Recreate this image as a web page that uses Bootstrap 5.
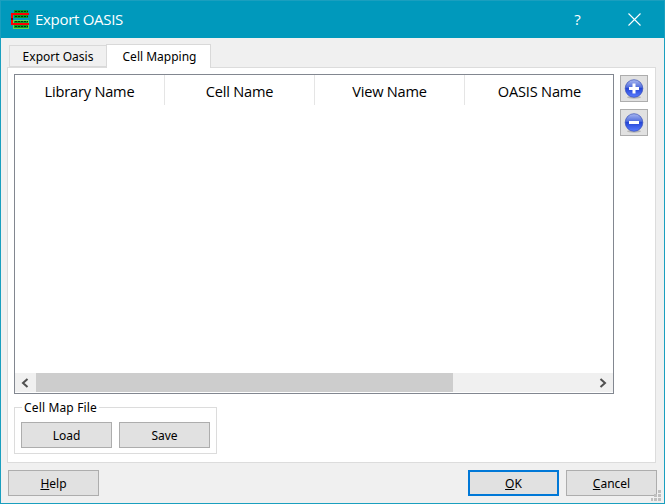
<!DOCTYPE html>
<html lang="en">
<head>
<meta charset="utf-8">
<meta name="viewport" content="width=device-width, initial-scale=1">
<title>Export OASIS</title>
<link href="https://cdn.jsdelivr.net/npm/bootstrap@5.3.0/dist/css/bootstrap.min.css" rel="stylesheet">
<style>
body{width:665px;height:504px;overflow:hidden;font:12px/16px "Noto Sans","Open Sans",sans-serif;color:#000}
.window{width:665px;height:504px;background:#f0f0f0;border:1px solid #1a9fbf}
.titlebar{height:37px;background:#0099bc;color:#fff;padding-left:10px}
.logo{margin-top:1px}
.caption{font-family:"Open Sans",sans-serif;font-size:15px;margin-left:4px;letter-spacing:-.3px;padding-bottom:2px}
.help-mark{font-family:"Open Sans",sans-serif;font-size:15px;width:57px;padding-bottom:2px}
.close-mark{width:57px;margin-right:1px}
.tabs{height:29px;padding:5px 0 0 8px}
.tabs .nav-link{border:1px solid #d9d9d9;border-radius:0;color:#000;padding:0;text-align:center;margin:0}
.tabs .tab-one{width:97px;height:22px;border-right:0;line-height:22px;background:#f0f0f0}
.tabs .tab-two{width:105px;height:24px;line-height:24px;background:#fff;border-bottom:0;padding-left:2px;margin-bottom:-1px;position:relative;z-index:1}
.pane{margin:0 8px 0 6px;height:396px;background:#fff;border:1px solid #dcdcdc;padding:6px 7px 0 6px}
.grid{width:600px;height:320px;border:1px solid #828790}
.heads{height:30px;font-family:"Open Sans",sans-serif;font-size:14.6px;letter-spacing:-.2px}
.heads>div{width:150px;flex:none;border-right:1px solid #e5e5e5;padding-top:2px}
.heads>div:last-child{border:0;width:149px}
.scroll{height:19px;background:#f0f0f0;margin-bottom:1px}
.thumb{width:417px;background:#cdcdcd;height:19px}
.arrow{width:21px}
.arrow:first-child{padding-right:2px}
.arrow:last-child{padding-left:1px}
.dlg-btn{width:91px;height:26px;background:#e1e1e1;border:1px solid #adadad;border-radius:0;padding:1px 0 0;font-size:12px;line-height:24px;color:#000}
.dlg-btn:hover{background:#e5f1fb}
.dlg-btn.default{border:2px solid #0078d7;line-height:22px}
.tool{width:28px;height:27px;background:#e1e1e1;border:1px solid #adadad;border-radius:0;padding:0}
.tools{padding-top:1px;gap:7px}
.group{width:203px;height:54px;margin-top:6px;position:relative;padding:22px 7px 0 7px}
.frame{height:47px;border:1px solid #dcdcdc;position:absolute;left:0;right:0;top:7px}
.legend-text{position:absolute;left:8px;top:0;background:#fff;padding:0 2px;line-height:16px;white-space:nowrap;letter-spacing:.15px}
.actions{padding:7px 7px 0 7px;gap:7px}
.grip{position:absolute;left:651px;top:490px}
svg{display:block}
</style>
</head>
<body>
<div class="window">
  <header class="titlebar d-flex align-items-center">
    <svg class="logo" width="20" height="20" viewBox="0 0 20 20" shape-rendering="crispEdges">
      <path fill="#08a02a" d="M3 0h14v8H3z"/>
      <path fill="#62d850" d="M2 10h16v9H2z"/>
      <path fill="#08a02a" d="M3 11h14v7H3z"/>
      <path fill="#0099bc" d="M2 8h16v2H2z"/>
      <path stroke="#00380c" stroke-width="1" stroke-dasharray="2 1" d="M4 1.500h13M4 6.500h13M4 11.500h13M4 16.500h13"/>
      <path fill="none" stroke="#f00" stroke-width="2" d="M18 4H1v10h17"/>
      <path fill="#800" d="M0 8h2v2H0z"/>
    </svg>
    <span class="caption">Export OASIS</span>
    <span class="help-mark ms-auto text-center">?</span>
    <span class="close-mark d-flex justify-content-center"><svg width="13" height="13"><path d="M.5.5l12 12M12.500.5l-12 12" stroke="#fff" stroke-width="1.100"/></svg></span>
  </header>
  <nav class="tabs nav align-items-end">
    <a class="nav-link tab-one">Export Oasis</a>
    <a class="nav-link tab-two">Cell Mapping</a>
  </nav>
  <main class="pane">
    <div class="d-flex">
      <div class="grid d-flex flex-column">
        <div class="heads d-flex">
          <div class="d-flex align-items-center justify-content-center">Library Name</div>
          <div class="d-flex align-items-center justify-content-center">Cell Name</div>
          <div class="d-flex align-items-center justify-content-center">View Name</div>
          <div class="d-flex align-items-center justify-content-center">OASIS Name</div>
        </div>
        <div class="scroll d-flex align-items-center mt-auto">
          <div class="arrow d-flex justify-content-center"><svg width="8" height="10"><path d="M6.500 1L2 5l4.500 4" fill="none" stroke="#505050" stroke-width="2"/></svg></div>
          <div class="thumb"></div>
          <div class="arrow d-flex justify-content-center ms-auto"><svg width="8" height="10"><path d="M1.500 1L6 5 1.500 9" fill="none" stroke="#505050" stroke-width="2"/></svg></div>
        </div>
      </div>
      <div class="tools d-flex flex-column ms-auto">
        <button class="btn tool d-flex justify-content-center align-items-center" aria-label="Add">
          <svg width="20" height="20" viewBox="0 0 20 20">
            <defs><linearGradient id="ball" x2="0" y2="1"><stop stop-color="#a9b8f0"/><stop offset=".42" stop-color="#5570dd"/><stop offset=".5" stop-color="#2546d6"/><stop offset="1" stop-color="#5b7dff"/></linearGradient></defs>
            <ellipse cx="10" cy="18.300" rx="7" ry="1.500" fill="#9a9a9a" opacity=".6"/>
            <circle cx="10" cy="9.500" r="8.800" fill="url(#ball)" stroke="#344cb8" stroke-width=".7"/>
            <path d="M10 4.500v10M5 9.500h10" stroke="#fff" stroke-width="3"/>
          </svg>
        </button>
        <button class="btn tool d-flex justify-content-center align-items-center" aria-label="Remove">
          <svg width="20" height="20" viewBox="0 0 20 20">
            <ellipse cx="10" cy="18.300" rx="7" ry="1.500" fill="#9a9a9a" opacity=".6"/>
            <circle cx="10" cy="9.500" r="8.800" fill="url(#ball)" stroke="#344cb8" stroke-width=".7"/>
            <path d="M5 9.500h10" stroke="#fff" stroke-width="3"/>
          </svg>
        </button>
      </div>
    </div>
    <section class="group">
      <div class="frame"></div>
      <span class="legend-text">Cell Map File</span>
      <div class="d-flex justify-content-between position-relative">
        <button class="btn dlg-btn">Load</button>
        <button class="btn dlg-btn">Save</button>
      </div>
    </section>
  </main>
  <footer class="actions d-flex">
    <button class="btn dlg-btn me-auto"><u>H</u>elp</button>
    <button class="btn dlg-btn default"><u>O</u>K</button>
    <button class="btn dlg-btn"><u>C</u>ancel</button>
  </footer>
  <svg class="grip" width="11" height="11" fill="#bfbfbf" shape-rendering="crispEdges"><path d="M7 0h3v3H7zM3 4h3v3H3zM7 4h3v3H7zM0 8h2v3H0zM3 8h3v3H3zM7 8h3v3H7z"/></svg>
</div>
<script src="https://cdn.jsdelivr.net/npm/bootstrap@5.3.0/dist/js/bootstrap.bundle.min.js"></script>
</body>
</html>
